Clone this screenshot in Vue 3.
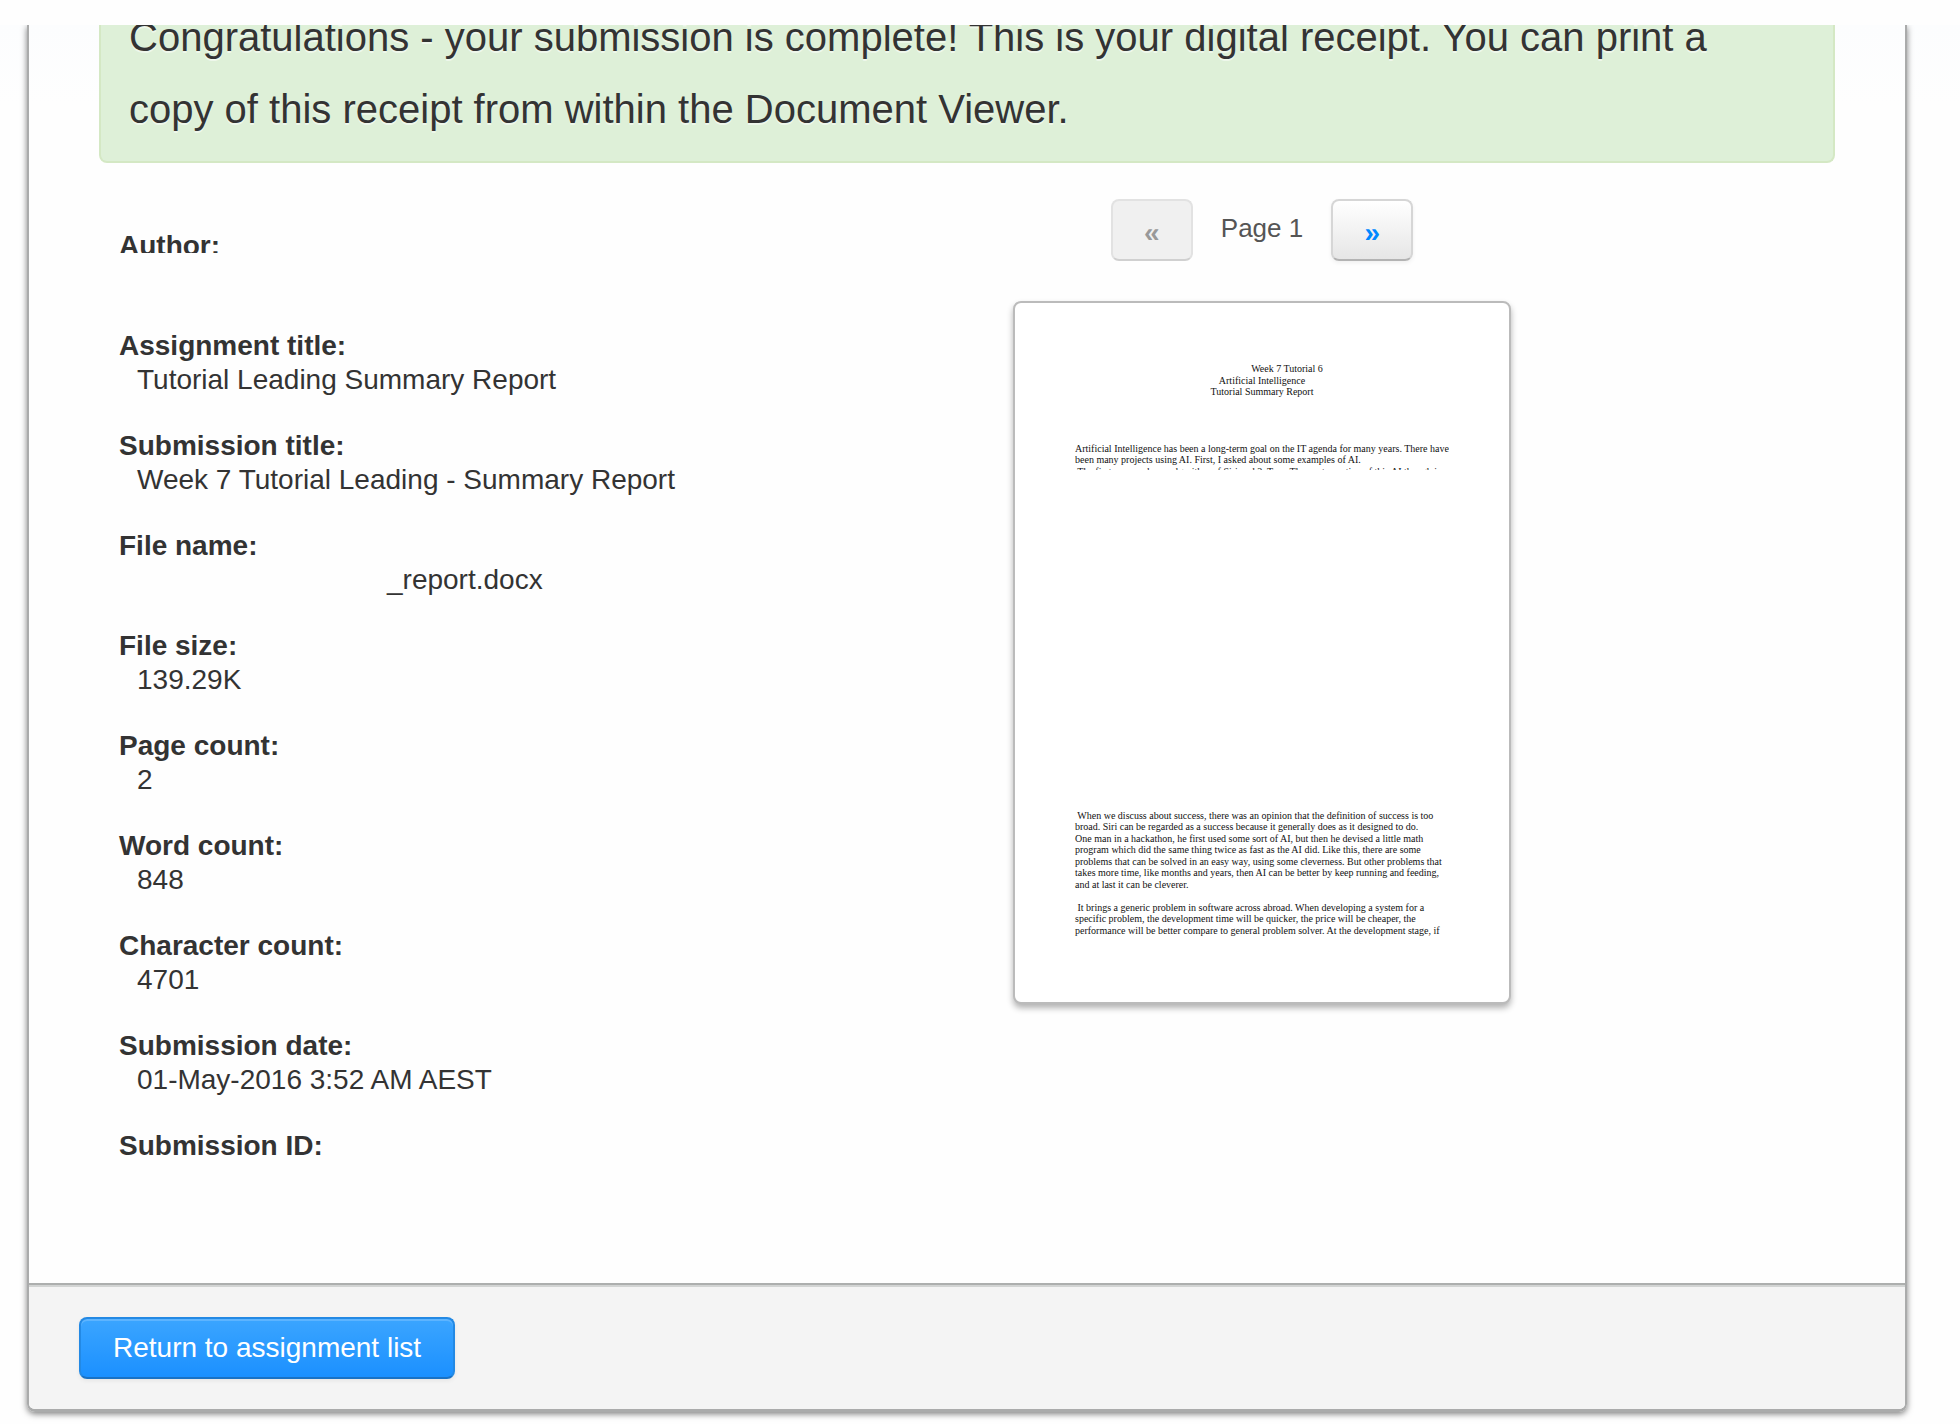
<script setup>
const fields = [
  { label: 'Author:', value: '', kind: 'author' },
  { label: 'Assignment title:', value: 'Tutorial Leading Summary Report' },
  { label: 'Submission title:', value: 'Week 7 Tutorial Leading - Summary Report' },
  { label: 'File name:', value: '_report.docx', kind: 'file' },
  { label: 'File size:', value: '139.29K' },
  { label: 'Page count:', value: '2' },
  { label: 'Word count:', value: '848' },
  { label: 'Character count:', value: '4701' },
  { label: 'Submission date:', value: '01-May-2016 3:52 AM AEST' },
  { label: 'Submission ID:', value: '' },
]

const intro = `Artificial Intelligence has been a long-term goal on the IT agenda for many years. There have
been many projects using AI. First, I asked about some examples of AI.
 The first one can be an algorithm of Siri and 2. Two. The next question of this AI though is`

const discussion = ` When we discuss about success, there was an opinion that the definition of success is too
broad. Siri can be regarded as a success because it generally does as it designed to do.
One man in a hackathon, he first used some sort of AI, but then he devised a little math
program which did the same thing twice as fast as the AI did. Like this, there are some
problems that can be solved in an easy way, using some cleverness. But other problems that
takes more time, like months and years, then AI can be better by keep running and feeding,
and at last it can be cleverer.

 It brings a generic problem in software across abroad. When developing a system for a
specific problem, the development time will be quicker, the price will be cheaper, the
performance will be better compare to general problem solver. At the development stage, if`
</script>

<template>
  <div class="page">
    <main class="panel">
      <div class="body">
        <p class="alert">
          Congratulations - your submission is complete! This is your digital receipt. You can print a
          copy of this receipt from within the Document Viewer.
        </p>
        <div class="columns">
          <dl class="fields">
            <div v-for="f in fields" :key="f.label" class="field" :class="f.kind">
              <dt>{{ f.label }}</dt>
              <dd>{{ f.value }}</dd>
            </div>
          </dl>
          <section class="preview">
            <nav class="pager">
              <button class="page-button" type="button" disabled aria-label="Previous page">«</button>
              <span class="page-label">Page 1</span>
              <button class="page-button" type="button" aria-label="Next page">»</button>
            </nav>
            <article class="sheet">
              <header class="sheet-head">
                <p class="session">Week 7 Tutorial 6</p>
                <p>Artificial Intelligence</p>
                <p>Tutorial Summary Report</p>
              </header>
              <p class="intro">{{ intro }}</p>
              <p class="discussion">{{ discussion }}</p>
            </article>
          </section>
        </div>
      </div>
      <footer class="footer">
        <button class="return" type="button">Return to assignment list</button>
      </footer>
    </main>
  </div>
</template>

<style>
body {
  margin: 0;
  background: #fefefe;
}
</style>

<style scoped>
.page {
  margin-top: 25px;
  padding: 0 53px 12px 27px;
  overflow: hidden;
  background: linear-gradient(#fcfdfe, #fefefe 80px);
  color: #333;
  font-family: "Liberation Sans", Arial, sans-serif;
}
p, dl, dd {
  margin: 0;
}
.panel {
  border: 2px solid #aaabab;
  border-top: 0;
  border-bottom-width: 3px;
  border-radius: 0 0 8px 8px;
  box-shadow: 0 2px 6px rgba(0, 0, 0, 0.5);
}
.body {
  display: flow-root;
  padding: 0 70px 120px;
}
.alert {
  margin-top: -24px;
  padding: 0 70px 16px 28px;
  border: 2px solid #d4e8c4;
  border-top: 0;
  border-radius: 0 0 8px 8px;
  background: #def0d8;
  font-size: 40px;
  line-height: 72px;
  text-shadow: 0 2px 0 rgba(255, 255, 255, 0.5);
}
.columns {
  display: grid;
  grid-template-columns: minmax(0, 1fr) minmax(0, 1fr);
}
.fields {
  padding: 66px 20px 0;
  font-size: 28px;
  line-height: 34px;
}
.field {
  height: 100px;
}
.field:last-child {
  height: 34px;
}
.field dt {
  font-weight: bold;
}
.field dd {
  margin-left: 18px;
}
.author dt {
  height: 24px;
  overflow: hidden;
}
.file dd {
  margin-left: 268px;
}
.preview {
  padding: 36px 0 0 46px;
}
.pager {
  display: flex;
  justify-content: center;
  gap: 28px;
  width: 498px;
}
.page-button {
  width: 82px;
  height: 62px;
  padding: 6px 0 0;
  border: 2px solid #d6d6d6;
  border-bottom-color: #b3b3b3;
  border-radius: 8px;
  background: linear-gradient(#fff, #e6e6e6);
  box-shadow: 0 2px 4px rgba(0, 0, 0, 0.06);
  color: #0088ff;
  font: bold 28px/32px "Liberation Sans", Arial, sans-serif;
}
.page-button:disabled {
  border-color: #e2e2e2;
  border-bottom-color: #d0d0d0;
  background: #f0f0f0;
  box-shadow: none;
  color: #999;
}
.page-label {
  color: #555;
  font-size: 26px;
  line-height: 58px;
}
.sheet {
  box-sizing: border-box;
  width: 498px;
  height: 703px;
  margin-top: 40px;
  padding: 60px 60px 0;
  border: 2px solid #bbb;
  border-radius: 8px;
  box-shadow: 0 4px 6px rgba(0, 0, 0, 0.3);
  background: #fff;
  color: #111;
  font: 10px/1.15 "Liberation Serif", "Times New Roman", serif;
  white-space: pre;
}
.sheet-head {
  text-align: center;
}
.session {
  padding-left: 50px;
}
.intro {
  height: 27px;
  margin-top: 45px;
  overflow: hidden;
}
.discussion {
  margin-top: 340px;
}
.footer {
  padding: 32px 50px 30px;
  border-top: 2px solid #adafae;
  border-radius: 0 0 6px 6px;
  background: #f4f4f4;
  box-shadow: inset 0 2px 0 #d2d4d3;
}
.return {
  display: block;
  height: 62px;
  padding: 0 32px;
  border: 2px solid #2389e4;
  border-bottom-color: #1a72c4;
  border-radius: 8px;
  background: linear-gradient(#3ba5ff, #1b90ff);
  box-shadow: inset 0 2px 0 #5db4ff, 0 2px 4px rgba(0, 0, 0, 0.06);
  color: #fff;
  font: 28px/34px "Liberation Sans", Arial, sans-serif;
}
</style>
